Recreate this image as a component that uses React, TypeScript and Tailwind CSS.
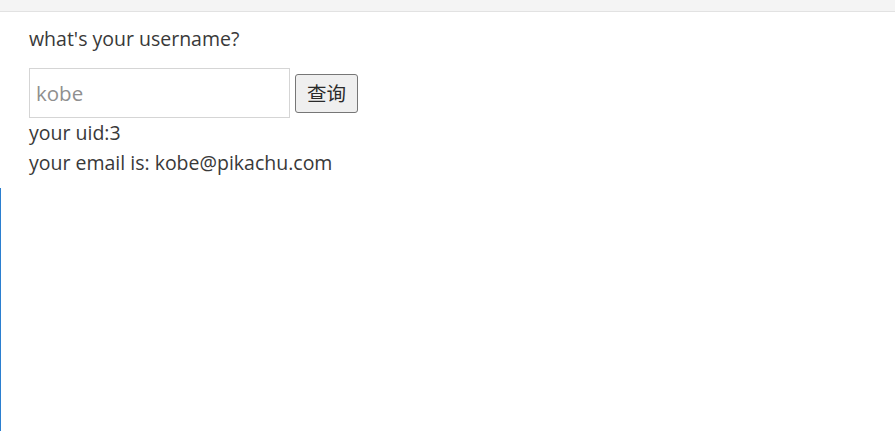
export default function App() {
  return (
    <div className="w-[895px] h-[431px] bg-white flex flex-col overflow-hidden" style={{ fontFamily: '"Open Sans", "Noto Sans CJK SC", sans-serif' }}>
      <div className="h-[12px] bg-[#f4f4f4] border-b border-[#e2e2e2] shrink-0" />
      <div className="pl-[29px] text-[19.5px] text-[#393939] leading-[30px]">
        <div className="pt-[12px]">what's your username?</div>
        <div className="flex items-center gap-[5px] mt-[14px]">
          <input
            className="w-[261px] h-[50px] border border-[#d5d5d5] px-[6px] text-[20.5px] text-[#393939] placeholder:text-[#8f8f8f] outline-none"
            placeholder="kobe"
            style={{ fontFamily: '"Open Sans", sans-serif' }}
          />
          <button className="h-[39px] w-[63px] bg-[#efefef] border border-[#767676] rounded-[3px] text-[19.5px] text-[#2a2a2a] leading-none" style={{ fontFamily: '"Noto Sans CJK SC", sans-serif' }}>
            查询
          </button>
        </div>
        <div>your uid:3</div>
        <div>your email is: kobe@pikachu.com</div>
      </div>
      <div className="flex-1 mt-[10px] border-l border-[#2b7fd0]" />
    </div>
  );
}
